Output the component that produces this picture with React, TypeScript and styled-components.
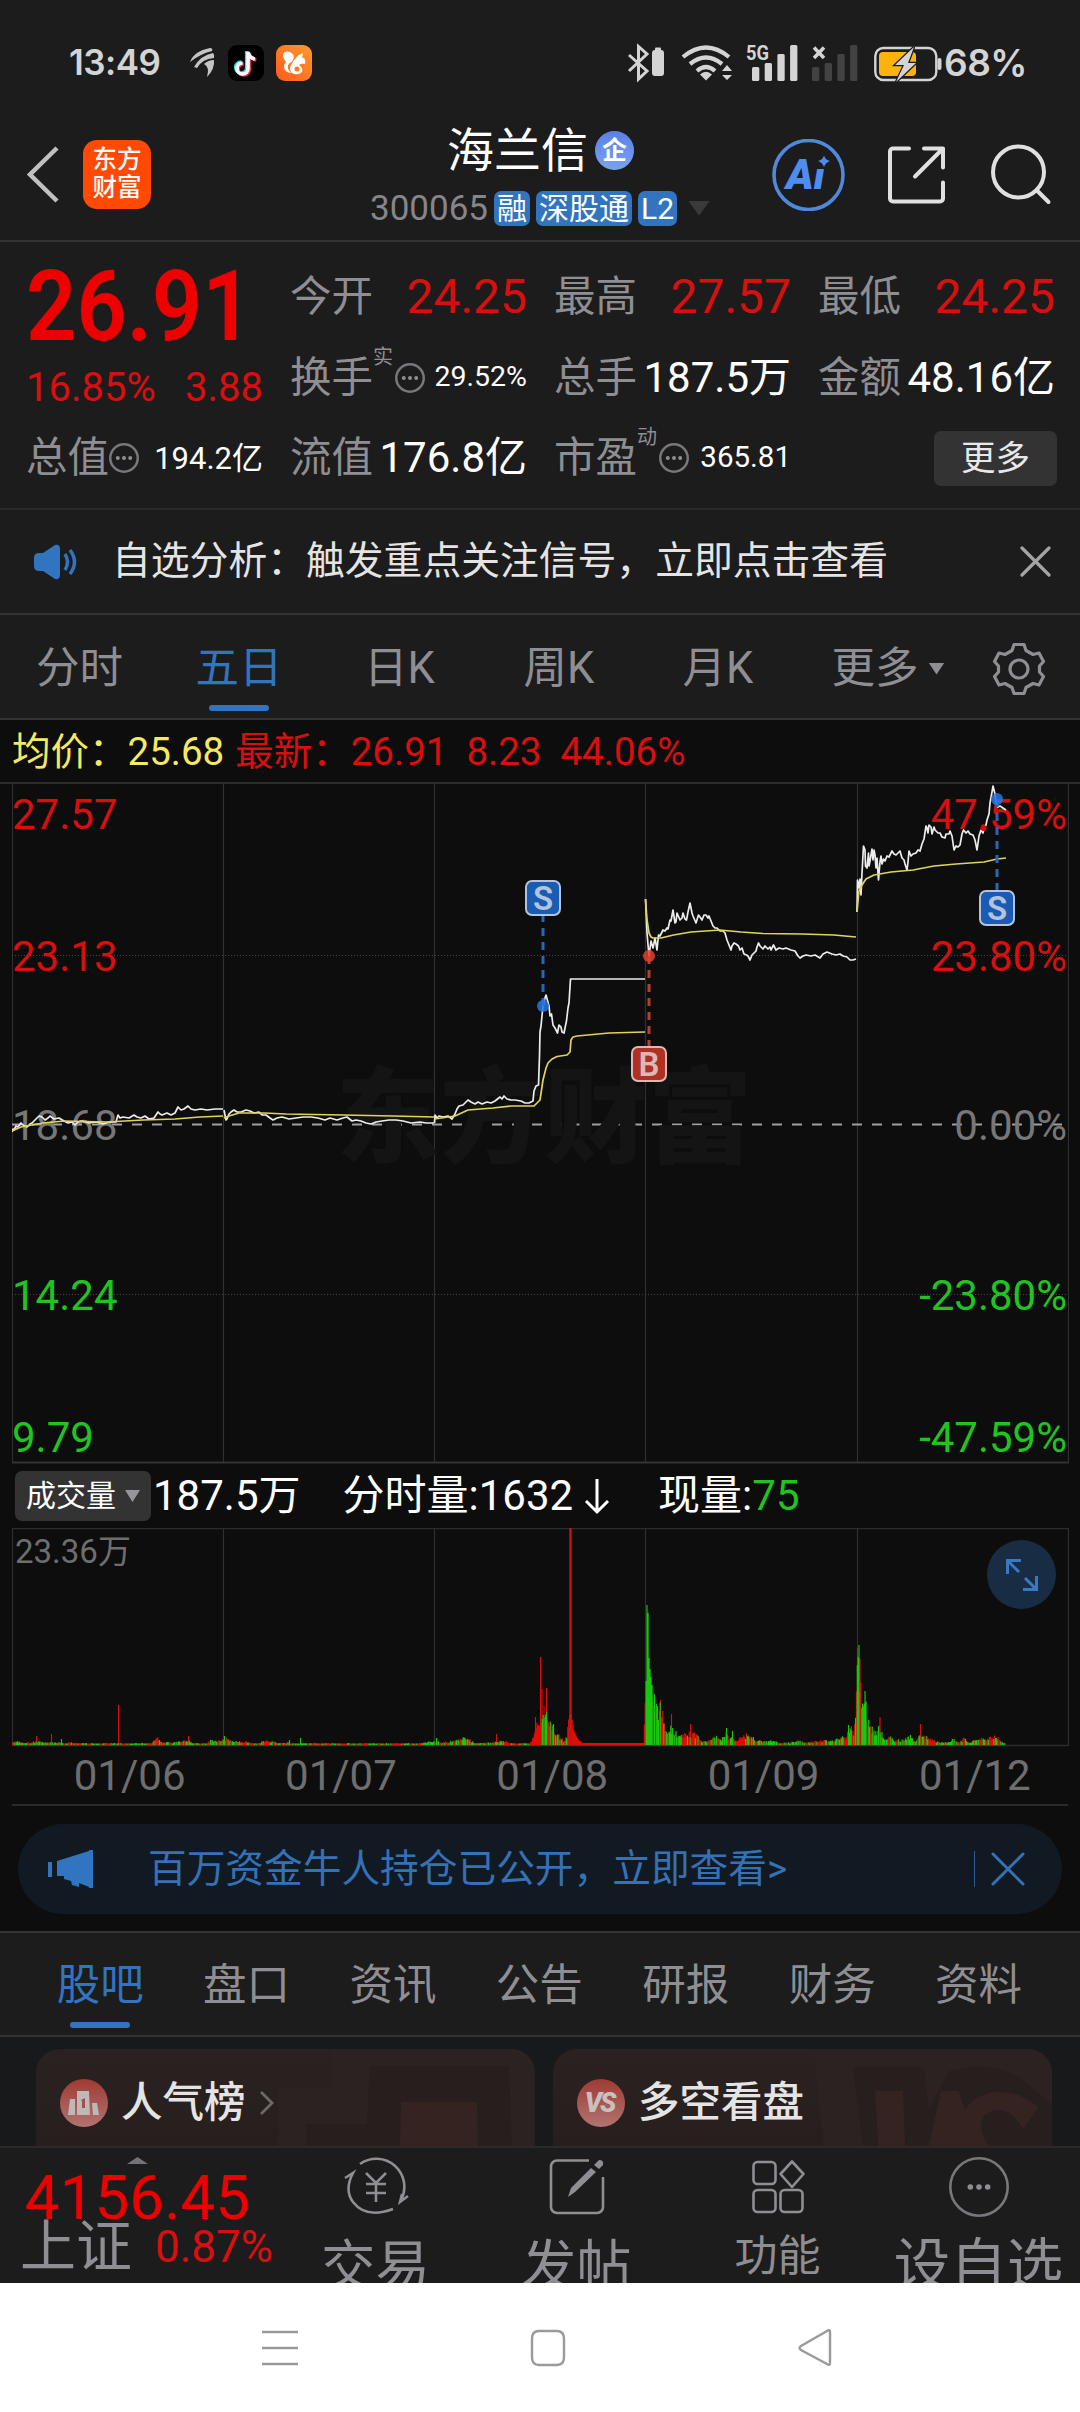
import React from "react";
import styled, { createGlobalStyle, css } from "styled-components";

const c = {
  panel: "#1c1c1c",
  ground: "#0d0d0d",
  line: "#333333",
  label: "#8e8e93",
  muted: "#6e6e6e",
  white: "#ffffff",
  soft: "#e4e4e4",
  red: "#d90f0f",
  hot: "#ee0000",
  green: "#20c420",
  blue: "#3174c0",
  yellow: "#f5e960",
};

const GlobalStyle = createGlobalStyle`
  * { box-sizing: border-box; }
  body {
    margin: 0;
    background: ${c.panel};
    font-family: Roboto, "Noto Sans CJK SC", sans-serif;
    line-height: 1;
    white-space: nowrap;
  }
  svg { display: block; flex: none; }
`;

const Screen = styled.div`
  width: 1080px;
  height: 2412px;
  display: flex;
  flex-direction: column;
  overflow: hidden;
  background: ${c.panel};
`;

const Text = styled.span<{ $size: number; $color?: string; $weight?: number }>`
  flex: none;
  font-size: ${(p) => p.$size}px;
  color: ${(p) => p.$color ?? c.white};
  font-weight: ${(p) => p.$weight ?? 400};
`;

/* ---------- status bar ---------- */

const StatusBar = styled.header`
  height: 125px;
  flex: none;
  display: flex;
  align-items: center;
  padding: 0 53px 0 69px;
  font-family: Inter, Roboto, sans-serif;
`;

const StatusText = styled.span<{ $size: number }>`
  font-size: ${(p) => p.$size}px;
  font-weight: 600;
  color: #d4d4d4;
  letter-spacing: -0.5px;
`;

const StatusApps = styled.div`
  display: flex;
  align-items: center;
  gap: 12px;
  margin-left: 28px;
  flex: 1;
`;

const AppTile = styled.div<{ $bg: string }>`
  width: 36px;
  height: 36px;
  border-radius: 9px;
  background: ${(p) => p.$bg};
`;

function LeafIcon() {
  return (
    <svg width="28" height="32" viewBox="0 0 28 32" fill="#c4c4c4">
      <path d="M2 15Q6 4 22 1Q25 1 24 4Q12 7 2 15Z" />
      <path d="M6 20Q13 8 25 6Q27 8 26 11Q14 12 9 21Z" />
      <path d="M19 30Q22 20 16 17Q20 13 26 13Q27 22 19 30Z" />
    </svg>
  );
}

function NoteIcon() {
  const d = "M20 7V23.5A5.5 5.5 0 1 1 14.500 18M20 7Q21 13 27 14";
  return (
    <svg width="36" height="36" viewBox="0 0 36 36" fill="none" strokeWidth="3.6">
      <path d={d} stroke="#25e0dc" transform="translate(-1.300 -1)" />
      <path d={d} stroke="#f0305a" transform="translate(1.300 1)" />
      <path d={d} stroke="#fff" />
    </svg>
  );
}

function SquirrelIcon() {
  return (
    <svg width="36" height="36" viewBox="0 0 36 36" fill="#fff">
      <path d="M8 14C5 9 9 5 14 7C19 9 19 15 14 18C11 20 11 24 15 28C8 27 6 21 10 17Z" />
      <path d="M27 8C21 10 18 15 15 20C12 26 16 30 22 29C28 28 27 23 24 21C22 20 25 18 29 19C30 15 28 12 26 13Z" />
      <circle cx="21" cy="24" r="2.500" fill="#ff7a1e" />
    </svg>
  );
}

function StatusIcons() {
  const bars = [14, 18, 27, 36];
  return (
    <svg width="318" height="40" viewBox="626 42 318 40" fill="none">
      <path d="M629 54L647 70L638.500 78V45.500L647 53L629 70" stroke="#d4d4d4" strokeWidth="3" />
      <rect x="652" y="49" width="12" height="26" rx="3" fill="#d4d4d4" />
      <rect x="655" y="46.500" width="6" height="4" rx="1" fill="#d4d4d4" />
      <g stroke="#d4d4d4" strokeWidth="4.200">
        <path d="M683 56Q706 37 729 56" />
        <path d="M690 63Q706 50 722 63" />
        <path d="M697 70Q706 62 715 70" />
      </g>
      <path d="M700 73.500Q706 68 712 73.500L706 79.500Z" fill="#d4d4d4" />
      <path d="M722 70L727 64L732 70ZM722 74L727 79L732 74Z" fill="#d4d4d4" />
      <text x="746" y="58.500" fontFamily="Roboto" fontWeight="700" fontSize="20" fill="#d4d4d4" textLength="23" lengthAdjust="spacingAndGlyphs">
        5G
      </text>
      {bars.map((h, i) => (
        <rect key={i} x={752 + i * 12.700} y={80 - h} width="7.300" height={h} rx="1.500" fill="#d4d4d4" />
      ))}
      {bars.map((h, i) => (
        <rect key={i} x={812 + i * 12.700} y={80 - h} width="7.300" height={h} rx="1.500" fill="#424242" />
      ))}
      <path d="M814 46.500L824 57M824 46.500L814 57" stroke="#d4d4d4" strokeWidth="3.500" />
      <rect x="875.300" y="47" width="61" height="32" rx="8" stroke="#d4d4d4" strokeWidth="2.400" />
      <rect x="937.500" y="57" width="4" height="12" rx="2" fill="#d4d4d4" />
      <rect x="879" y="51" width="37" height="24" rx="4" fill="#ffb30a" />
      <path
        d="M914 46L895 64H904L896 81L916 62H908Z"
        fill="#d4d4d4"
        stroke={c.panel}
        strokeWidth="2.500"
        paintOrder="stroke"
      />
    </svg>
  );
}

/* ---------- title bar ---------- */

const TitleBar = styled.div`
  height: 117px;
  flex: none;
  display: grid;
  grid-template-columns: 1fr 342px 1fr;
  border-bottom: 2px solid ${c.line};
`;

const TitleLeft = styled.div`
  display: flex;
  align-items: flex-start;
  gap: 23px;
  padding: 15px 0 0 25px;
`;

const BrandTile = styled.div`
  width: 68px;
  height: 69px;
  border-radius: 14px;
  background: #ff4a06;
  display: flex;
  flex-direction: column;
  align-items: center;
  justify-content: center;
  gap: 4px;
  padding-bottom: 1px;
`;

const TitleCenter = styled.div`
  display: flex;
  flex-direction: column;
  align-items: center;
`;

const NameRow = styled.div`
  display: flex;
  align-items: center;
  gap: 7px;
  height: 50px;
  padding-left: 1px;
`;

const CompanyBadge = styled.div`
  width: 39px;
  height: 39px;
  border-radius: 50%;
  background: linear-gradient(#5a80e8, #7ba2ec);
  display: flex;
  align-items: center;
  justify-content: center;
`;

const CodeRow = styled.div`
  display: flex;
  align-items: center;
  gap: 6px;
  height: 36px;
  margin-top: 15px;
`;

const Tag = styled.span`
  height: 35px;
  line-height: 35px;
  padding: 0 3px;
  border-radius: 7px;
  background: ${c.blue};
  color: ${c.white};
  font-size: 30px;
`;

const TitleRight = styled.div`
  display: flex;
  align-items: flex-start;
  justify-content: flex-end;
  padding: 14px 28px 0 0;
`;

/* ---------- quote panel ---------- */

const QuotePanel = styled.section`
  height: 268px;
  flex: none;
  display: grid;
  grid-template-columns: repeat(4, 237px);
  grid-template-rows: 80px 81px 80px;
  column-gap: 27px;
  padding: 15px 26px 0;
  border-bottom: 2px solid #2a2a2a;
`;

const LastPrice = styled.div`
  grid-row: span 2;
  display: flex;
  flex-direction: column;
`;

const BigNumber = styled.div`
  height: 102px;
  display: flex;
  align-items: center;
  font-size: 98px;
  font-weight: 600;
  color: ${c.hot};
  transform: scaleX(0.9);
  transform-origin: left;
`;

const Spread = styled.div<{ $h?: number }>`
  display: flex;
  align-items: center;
  justify-content: space-between;
  height: ${(p) => (p.$h ? `${p.$h}px` : "auto")};
`;

const LabelGroup = styled.div`
  display: flex;
  align-items: center;
`;

const Superscript = styled.span`
  align-self: flex-start;
  margin-top: -10px;
  margin-right: 2px;
  font-size: 20px;
  color: ${c.label};
`;

const MoreButton = styled.button`
  justify-self: end;
  align-self: center;
  width: 123px;
  height: 55px;
  border: 0;
  border-radius: 7px;
  background: #333333;
  color: #e8e8e8;
  font: 400 34.500px/1 Roboto, "Noto Sans CJK SC", sans-serif;
  margin-right: -2px;
`;

function DotsIcon({ size = 30, stroke = 2.5, r = 2 }: { size?: number; stroke?: number; r?: number }) {
  const m = size / 2;
  return (
    <svg width={size} height={size} viewBox={`0 0 ${size} ${size}`} fill="none">
      <circle cx={m} cy={m} r={m - stroke / 2} stroke="#78787c" strokeWidth={stroke} />
      {[-1, 0, 1].map((i) => (
        <circle key={i} cx={m + i * r * 3.100} cy={m} r={r} fill="#8e8e93" />
      ))}
    </svg>
  );
}

type QuoteProps = { label: string; value: string; size: number; color?: string; sup?: string; dots?: boolean };

function Quote({ label, value, size, color, sup, dots }: QuoteProps) {
  return (
    <Spread>
      <LabelGroup>
        <Text $size={41.500} $color={c.label}>{label}</Text>
        {sup && <Superscript>{sup}</Superscript>}
        {dots && <DotsIcon />}
      </LabelGroup>
      <Text $size={size} $color={color}>{value}</Text>
    </Spread>
  );
}

/* ---------- notice ---------- */

const Notice = styled.div`
  height: 105px;
  flex: none;
  display: flex;
  align-items: center;
  padding: 0 29px 0 32px;
  border-bottom: 2px solid ${c.line};
`;

const Grow = styled.div<{ $pl?: number }>`
  flex: 1;
  display: flex;
  padding-left: ${(p) => p.$pl ?? 0}px;
`;

function Cross({ size, color, w }: { size: number; color: string; w: number }) {
  return (
    <svg width={size} height={size} viewBox={`0 0 ${size} ${size}`} stroke={color} strokeWidth={w} strokeLinecap="round">
      <path d={`M2 2L${size - 2} ${size - 2}M${size - 2} 2L2 ${size - 2}`} />
    </svg>
  );
}

/* ---------- tabs ---------- */

const PeriodTabs = styled.nav`
  height: 105px;
  flex: none;
  display: flex;
  border-bottom: 2px solid ${c.line};
`;

const Tab = styled.div<{ $w: number; $on?: boolean }>`
  position: relative;
  width: ${(p) => p.$w}px;
  display: flex;
  align-items: center;
  justify-content: center;
  gap: 10px;
  padding-top: 4px;
  font-size: 43.500px;
  color: ${(p) => (p.$on ? c.blue : c.label)};
  ${(p) =>
    p.$on &&
    css`
      &::after {
        content: "";
        position: absolute;
        left: 50%;
        margin-left: -30px;
        bottom: 7px;
        width: 60px;
        height: 6px;
        border-radius: 3px;
        background: ${c.blue};
      }
    `}
`;

const Triangle = styled.i<{ $w: number; $h: number; $color: string; $up?: boolean }>`
  width: ${(p) => p.$w}px;
  height: ${(p) => p.$h}px;
  background: ${(p) => p.$color};
  clip-path: ${(p) => (p.$up ? "polygon(50% 0, 100% 100%, 0 100%)" : "polygon(0 0, 100% 0, 50% 100%)")};
`;

/* ---------- charts ---------- */

const Legend = styled.div`
  height: 62px;
  flex: none;
  display: flex;
  align-items: center;
  gap: 19px;
  padding: 2px 0 0 12px;
`;

const ChartGround = styled.section`
  height: 1211px;
  flex: none;
  display: flex;
  flex-direction: column;
  background: ${c.ground};
  padding-bottom: 16px;
`;

const PriceFrame = styled.div`
  position: relative;
  width: 1080px;
  height: 681px;
  flex: none;
  padding-left: 12px;
  border-top: 2px solid #2c2c2c;
`;

const AxisLabel = styled.span<{ $y: number; $right?: boolean; $color: string }>`
  position: absolute;
  top: ${(p) => p.$y - 21}px;
  ${(p) => (p.$right ? "right: 13px;" : "left: 12px;")}
  font-size: 42px;
  color: ${(p) => p.$color};
`;

const Watermark = styled.span`
  position: absolute;
  left: 336px;
  top: 284px;
  font-size: 104px;
  font-weight: 900;
  color: #141414;
`;

const Marker = styled.span<{ $x: number; $y: number; $bg: string; $edge: string }>`
  position: absolute;
  left: ${(p) => p.$x - 18}px;
  top: ${(p) => p.$y - 18}px;
  width: 36px;
  height: 36px;
  line-height: 33px;
  text-align: center;
  border: 2px solid ${(p) => p.$edge};
  border-radius: 7px;
  background: ${(p) => p.$bg};
  color: ${(p) => p.$edge};
  font-size: 33px;
  font-weight: 600;
`;

const columns = [0, 211, 422, 633, 845, 1056];

const priceLines = [
  "0,348 1,345 2,346 4,342 6,343 9,339 11,341 15,343 18,340 20,339 24,335 27,332 30,333 33,336 36,334 38,332 42,335 47,334 52,337 56,339 60,338 63,341 66,338 70,337 77,339 84,338 91,340 97,338 104,338 106,331 108,334 111,333 117,334 122,331 125,333 129,334 133,332 137,335 142,334 146,328 148,330 150,331 155,329 159,331 163,329 166,323 169,326 172,325 176,322 179,325 183,326 189,325 195,326 203,325 211,325",
  "212,326 214,336 215,335 217,330 219,328 222,326 225,328 229,328 234,326 238,327 242,329 247,328 250,331 254,331 258,334 261,336 265,334 270,333 277,335 284,334 291,333 299,333 306,334 313,336 318,334 325,336 331,334 335,333 340,337 344,336 349,337 354,339 359,340 364,338 370,337 377,336 384,336 391,337 399,339 408,338 414,339 422,339",
  "422.5,339 423,331 425,334 427,332 431,333 436,332 440,335 443,330 445,325 447,322 451,321 453,319 456,316 459,318 463,320 466,318 470,320 475,318 479,319 483,317 488,313 490,315 492,312 495,315 499,316 503,316 509,317 513,319 517,319 521,317 522,307 524,302 526.5,301 527.5,272 528,248 529,242 531,222 533,214 534,211 537,222 538,232 539.5,230 541,241 543,244 545.5,249 547,241 549,243 550,248 552,249 553,244 554.5,237 556,224 557,219 558.5,195 633,195",
  "633.5,115 635,149 637,172 639,157 641,164 643,154 645,166 646.5,151 648,152 651,146 653,147 655,144 656,145 658,136 659,137 661,126 663,139 664,138 665,129 668,136 670,134 671,129 673,135 674.5,136 676,128 678,119 680,129 681,132 684,139 686.5,131 688,133 690,136 692,131 694,131 696,134 697,132 699,137 701,142 703,144 705,144 708,147 711,147 713,149 715,156 717,161 719,166 720,162 722,159 724,160 726.5,162 728,166 730,164 732,170 734.5,171 736,172 738,176 740,171 744,167 745,163 746.5,159 748,162 751,165 753,162 756,165 758,163 759,166 761.5,161 764,166 767,164 771,165 774,164 779,166 783,167 786,172 788,174 791,172 794,171 799,172 803,171 808,174 811,170 815,168 820,170 824,171 828,170 831,172 835,173 838,176 841,176 844,175",
  "845,128 845.5,96 846,98 847,104 848,95 849,111 850,89 851.5,62 853,66 853.5,82 855,84 856.5,69 857,82 858,77 860,65 861,76 862,66 863,71 864,84 865,74 866.5,96 868,78 869,72 870,80 871.5,75 873,77 875,72 877,73 880,67 882,70 884,71 888,67 890,74 892,76 893,80 895,86 896,78 897,67 899,72 901,70 904,69 906,66 908,67 910,60 912,55 914,42 915,44 916,49 917,41 919,43 920,50 922,43 923,46 926,49 928,49 930,53 933,54 934,50 937,50 938,47 940,52 942,66 944,62 946,63 948,61 950,50 951.5,46 954,49 956,47 958,50 961,51 963,56 965,66 967,52 969,46 971,49 972,44 974,41 975,36 977,30 978,19 980,8 981,2 983,10 984,19 986,23 988,22 991,24 994,26",
];

const averageLines = [
  "0,347 9,343 31,339 52,337 95,338 131,336 163,335 188,333 211,332",
  "212,334 217,332 227,329 252,329 274,330 331,331 381,332 422,333",
  "422.5,335 443,332 456,326 481,324 499,322 522,322 528,316 531,296 534,284 536,279 540,275 545,272.500 555,271 558,268 559,256 561,253 565,252 597,249 633,248",
  "633.5,115 635,136 637,149 639,153 641,154 649,154 661.5,151 679,148 708,146 729,148 751,149.500 790,150 822,151 844,153",
  "845,128 847,107 850,101 854,95 862,91 879,88 901,86 922,82 944,80 972,78 985,75 994,74",
];

type TradeMark = { side: "S" | "B"; x: number; dot: number; box: number };
const trades: TradeMark[] = [
  { side: "S", x: 531, dot: 222, box: 114 },
  { side: "B", x: 637, dot: 172, box: 280 },
  { side: "S", x: 985, dot: 15, box: 124 },
];

const axis = [
  { y: 31, left: "27.57", right: "47.59%", color: c.red },
  { y: 173, left: "23.13", right: "23.80%", color: c.red },
  { y: 342, left: "18.68", right: "0.00%", color: "#777777" },
  { y: 512, left: "14.24", right: "-23.80%", color: c.green },
  { y: 654, left: "9.79", right: "-47.59%", color: c.green },
];

function PriceChart() {
  return (
    <PriceFrame>
      <Watermark>东方财富</Watermark>
      <svg width="1057" height="681" viewBox="0 0 1057 681" fill="none">
        {columns.map((x) => (
          <path key={x} d={`M${x + 0.5} 0V679`} stroke="#303030" strokeWidth="1.200" />
        ))}
        <path d="M0 678.500H1057" stroke="#333" strokeWidth="2" />
        <path d="M0 171.500H1056M0 510.500H1056" stroke="#444" strokeDasharray="1 2" />
        <path d="M0 340.500H1056" stroke="#a0a0a0" strokeWidth="1.800" strokeDasharray="10 10" />
      </svg>
      {axis.map((a) => (
        <React.Fragment key={a.left}>
          <AxisLabel $y={a.y} $color={a.color}>{a.left}</AxisLabel>
          <AxisLabel $y={a.y} $color={a.color} $right>{a.right}</AxisLabel>
        </React.Fragment>
      ))}
      <Overlay>
        <svg width="1057" height="681" viewBox="0 0 1057 681" fill="none">
          {priceLines.map((p) => (
            <polyline key={p} points={p} stroke="#ececec" strokeWidth="1.700" strokeLinejoin="round" />
          ))}
          {averageLines.map((p) => (
            <polyline key={p} points={p} stroke="#e0d458" strokeWidth="1.700" strokeLinejoin="round" />
          ))}
          <circle cx="971.500" cy="44" r="3" fill="#ee0000" />
          {trades.map((t) => (
            <g key={t.x} stroke={t.side === "S" ? "#2a66b4" : "#b8402f"} strokeWidth="3">
              <path d={`M${t.x} ${t.dot}V${t.box}`} strokeDasharray="8 6" />
              <circle cx={t.x} cy={t.dot} r="6" stroke="none" fill={t.side === "S" ? "#2878e6" : "#e0402e"} fillOpacity="0.850" />
            </g>
          ))}
        </svg>
        {trades.map((t) => (
          <Marker
            key={t.x}
            $x={t.x}
            $y={t.box}
            $bg={t.side === "S" ? "#1a5bb4" : "#b03024"}
            $edge={t.side === "S" ? "#b4c4dc" : "#dcb8b4"}
          >
            {t.side}
          </Marker>
        ))}
      </Overlay>
    </PriceFrame>
  );
}

const Overlay = styled.div`
  position: absolute;
  left: 12px;
  top: 0;
  width: 1057px;
  height: 681px;
`;

const VolumeHeader = styled.div`
  height: 65px;
  flex: none;
  display: flex;
  align-items: center;
  padding: 1px 0 0 15px;
`;

const IndicatorButton = styled.div`
  width: 136px;
  height: 50px;
  border-radius: 7px;
  background: #333333;
  display: flex;
  align-items: center;
  justify-content: center;
  gap: 9px;
  font-size: 30px;
  color: ${c.white};
`;

const Metric = styled.div<{ $ml: number }>`
  display: flex;
  align-items: center;
  margin-left: ${(p) => p.$ml}px;
`;

const VolumeFrame = styled.div`
  position: relative;
  height: 219px;
  flex: none;
  padding-left: 12px;
`;

const VolumeMax = styled.span`
  position: absolute;
  left: 15px;
  top: 7px;
  font-size: 33px;
  color: ${c.muted};
`;

const ExpandButton = styled.div`
  position: absolute;
  right: 24px;
  top: 12px;
  width: 69px;
  height: 69px;
  border-radius: 50%;
  background: #182c44;
  display: flex;
  align-items: center;
  justify-content: center;
`;

/* ceiling of the ordinary bars, as [x, height] */
const envelope: [number, number][] = [
  [0, 5], [6, 4], [20, 3], [26, 5], [30, 3], [60, 3], [64, 2], [138, 2], [146, 8], [150, 3], [163, 3], [176, 7], [180, 2], [195, 2],
  [200, 7], [205, 4], [214, 8], [220, 5], [235, 4], [240, 2], [246, 2], [252, 5], [262, 4], [266, 2], [276, 3], [280, 2], [410, 2],
  [422, 5], [430, 3], [437, 4], [442, 5], [453, 11], [458, 6], [463, 2], [484, 4], [493, 5], [498, 2], [518, 2], [522, 10], [524, 28],
  [527, 22], [531, 48], [534, 40], [536, 26], [541, 22], [546, 12], [552, 5], [555, 12], [557, 30], [559, 34], [562, 15], [566, 6],
  [571, 2], [632, 2],
  [633, 60], [635, 132], [637, 78], [640, 59], [643, 42], [648, 45], [651, 34], [655, 15], [659, 22], [664, 14], [672, 12], [679, 14],
  [684, 13], [688, 6], [695, 4], [704, 10], [709, 6], [714, 12], [724, 5], [733, 12], [739, 12], [744, 6], [755, 4], [760, 5],
  [766, 3], [779, 3], [786, 5], [794, 3], [808, 5], [820, 5], [833, 10], [837, 18], [842, 14], [844, 60],
  [846, 98], [849, 60], [853, 52], [857, 26], [863, 16], [868, 22], [872, 8], [877, 13], [882, 6], [890, 6], [898, 10], [903, 5],
  [908, 14], [913, 10], [918, 7], [925, 4], [935, 3], [942, 7], [947, 3], [952, 8], [958, 3], [967, 9], [973, 6], [978, 9], [984, 10],
  [989, 5], [994, 2],
];

/* bars that stand clear of their neighbours, as [x, height, rising] */
const spikes: [number, number, boolean][] = [
  [24, 9, true], [39, 11, true], [49, 6, false], [106, 40, true], [176, 9, true], [212, 9, false], [277, 5, false], [288, 7, false],
  [424, 7, false], [484, 11, true], [523, 28, true], [528, 88, true], [529.5, 56, true], [534, 57, true], [541, 21, false],
  [634.5, 140, false], [635.6, 132, false], [636.6, 87, false], [637.6, 76, false], [638.6, 68, false], [639.6, 60, false],
  [642, 51, false], [645, 39, false], [648, 45, true], [659, 31, true], [678, 21, true], [714, 17, false], [720, 14, false],
  [836, 20, false], [839, 19, true], [845, 97, true], [846.5, 100, false], [847.5, 86, true], [852.5, 54, false],
  [867.5, 28, true], [898, 10, false], [908, 21, true],
];

function ceilingAt(x: number) {
  for (let i = 1; i < envelope.length; i++) {
    const [x1, h1] = envelope[i];
    if (x <= x1) {
      const [x0, h0] = envelope[i - 1];
      return h0 + ((h1 - h0) * (x - x0)) / (x1 - x0 || 1);
    }
  }
  return 0;
}

function volumePaths() {
  let seed = 77;
  const rand = () => {
    seed = (seed * 16807) % 2147483647;
    return seed / 2147483647;
  };
  let up = "";
  let down = "";
  for (let x = 0.500; x < 994; x += 0.880) {
    const limit = (x > 555 && x < 633);
    const h = Math.max(1.500, ceilingAt(x) * (limit ? 0.950 : 0.500 + rand() * 0.500));
    const rising = limit || (x > 517 && x < 529) || (x > 633.5 && x < 641 ? false : rand() < 0.520);
    const seg = `M${x.toFixed(2)} 217v-${h.toFixed(1)}`;
    if (rising) up += seg;
    else down += seg;
  }
  spikes.forEach(([x, h, rising]) => {
    const seg = `M${x + 0.5} 217v-${h}`;
    if (rising) up += seg;
    else down += seg;
  });
  return { up, down };
}

function VolumeChart() {
  const { up, down } = volumePaths();
  return (
    <VolumeFrame>
      <svg width="1057" height="219" viewBox="0 0 1057 219" fill="none">
        <path d="M0 0.500H1056M0 217.500H1056" stroke="#2c2c2c" strokeWidth="1.500" />
        {columns.map((x) => (
          <path key={x} d={`M${x + 0.5} 0V218`} stroke="#303030" strokeWidth="1.200" />
        ))}
        <path d={up} stroke="#e00c08" strokeWidth="1.150" />
        <path d={down} stroke="#18c810" strokeWidth="1.150" />
        <path d="M558.500 217V0" stroke="#c41414" strokeWidth="2.400" />
        <path d="M0 217.500H994" stroke="#8a1c10" strokeWidth="1.200" />
      </svg>
      <VolumeMax>23.36万</VolumeMax>
      <ExpandButton>
        <svg width="34" height="34" viewBox="0 0 34 34" fill="none" stroke="#3a78c4" strokeWidth="3">
          <path d="M2.500 16V2.500H16M2.500 2.500L14 14M31.500 18V31.500H18M31.500 31.500L20 20" />
        </svg>
      </ExpandButton>
    </VolumeFrame>
  );
}

const DateRow = styled.div`
  height: 59px;
  flex: none;
  display: grid;
  grid-template-columns: repeat(5, 211.300px);
  justify-items: center;
  align-items: center;
  margin-left: 12px;
  width: 1056px;
  padding-left: 12px;
  border-bottom: 2px solid #2a2a2a;
  font-size: 42px;
  color: ${c.muted};
`;

const PromoBanner = styled.div`
  height: 90px;
  flex: none;
  margin: 18px 18px 0;
  border-radius: 45px;
  background: #111a22;
  display: flex;
  align-items: center;
  padding: 0 37px 0 30px;
`;

const Divider = styled.i`
  width: 1.500px;
  height: 36px;
  background: #2a5c94;
  margin-right: 16px;
`;

/* ---------- lower tabs and cards ---------- */

const SectionTabs = styled.nav`
  height: 106px;
  flex: none;
  display: flex;
  padding: 0 27px;
  border-top: 2px solid ${c.line};
  border-bottom: 2px solid ${c.line};
`;

const CardStrip = styled.section`
  height: 109px;
  flex: none;
  overflow: hidden;
  display: flex;
  gap: 18px;
  padding: 12px 28px 0 36px;
  background: #18191b;
`;

const Card = styled.div`
  position: relative;
  width: 499px;
  height: 140px;
  flex: none;
  overflow: hidden;
  border-radius: 24px;
  background: linear-gradient(#2a2221, #261d1d);
`;

const CardArt = styled.div`
  position: absolute;
  inset: 0;
`;

const CardHead = styled.div`
  position: relative;
  height: 108px;
  display: flex;
  align-items: center;
  padding-left: 24px;
  gap: 13px;
`;

const CardIcon = styled.div`
  width: 48px;
  height: 48px;
  border-radius: 50%;
  background: linear-gradient(#a03a34, #b07470);
  display: flex;
  align-items: center;
  justify-content: center;
`;

const VersusText = styled.span`
  font-size: 27px;
  font-weight: 900;
  font-style: italic;
  color: #c8c0be;
  letter-spacing: -2px;
  margin-left: -3px;
`;

/* ---------- bottom bar ---------- */

const BottomBar = styled.nav`
  height: 137px;
  flex: none;
  overflow: hidden;
  display: grid;
  grid-template-columns: 275px repeat(4, 201px);
  border-top: 2px solid #2a2a2a;
  background: ${c.panel};
`;

const IndexCell = styled.div`
  display: flex;
  flex-direction: column;
  align-items: center;
  padding-top: 9px;
`;

const IndexRow = styled.div<{ $mt: number; $h: number }>`
  display: flex;
  align-items: center;
  gap: 23px;
  height: ${(p) => p.$h}px;
  margin-top: ${(p) => p.$mt}px;
`;

const Action = styled.div`
  display: flex;
  flex-direction: column;
  align-items: center;
  padding-top: 9px;
`;

const ActionLabel = styled.span<{ $size: number; $center: number }>`
  font-size: ${(p) => p.$size}px;
  line-height: 60px;
  margin-top: ${(p) => p.$center - 99}px;
  color: ${c.label};
`;

function YenIcon() {
  return (
    <svg width="68" height="60" viewBox="0 0 68 60" fill="none" stroke={c.label} strokeWidth="2.600">
      <path d="M18 7A28 28 0 0 1 59 43M3 21L11 16Q2 33 11 45Q24 62 51 52M66 39L58 45L60 37" />
      <path d="M24 16L34 26L44 16M34 26V45M24 27H44M24 36H44" />
    </svg>
  );
}

function PostIcon() {
  return (
    <svg width="60" height="60" viewBox="0 0 60 60" fill="none" stroke={c.label} strokeWidth="2.600">
      <path d="M42 3.500H10A6 6 0 0 0 4 9.500V50A6 6 0 0 0 10 56H50A6 6 0 0 0 56 50V20" />
      <path d="M21 40L24 31L44 11L49 15L28 35ZM47 8L52 3Q57 3 56 8L52 12Z" fill={c.label} stroke="none" />
    </svg>
  );
}

function GridIcon() {
  return (
    <svg width="60" height="60" viewBox="0 0 60 60" fill="none" stroke={c.label} strokeWidth="2.600">
      <rect x="5.500" y="5" width="22" height="22" rx="4" />
      <rect x="5.500" y="33" width="22" height="22" rx="4" />
      <rect x="32.500" y="33" width="22" height="22" rx="4" />
      <path d="M44 4.500L55.500 17L44 30L32.500 17Z" strokeLinejoin="round" />
    </svg>
  );
}

const SystemNav = styled.footer`
  height: 131px;
  flex: 1;
  display: grid;
  grid-template-columns: 36px 36px 36px;
  column-gap: 232px;
  padding: 46px 0 0 262px;
  background: #ffffff;
`;

const sections = ["股吧", "盘口", "资讯", "公告", "研报", "财务", "资料"];

export default function App() {
  return (
    <Screen>
      <GlobalStyle />
      <StatusBar>
        <StatusText $size={35}>13:49</StatusText>
        <StatusApps>
          <LeafIcon />
          <AppTile $bg="#000"><NoteIcon /></AppTile>
          <AppTile $bg="linear-gradient(45deg, #ff5a1c, #ff9a2c)"><SquirrelIcon /></AppTile>
        </StatusApps>
        <StatusIcons />
        <StatusText $size={37}>68%</StatusText>
      </StatusBar>

      <TitleBar>
        <TitleLeft>
          <svg width="35" height="69" viewBox="0 0 35 69" fill="none" stroke="#c0c0c0" strokeWidth="4.500">
            <path d="M32 8L5 34.500L32 61" />
          </svg>
          <BrandTile>
            <Text $size={24.500} $weight={500}>东方</Text>
            <Text $size={24.500} $weight={500}>财富</Text>
          </BrandTile>
        </TitleLeft>
        <TitleCenter>
          <NameRow>
            <Text $size={47}>海兰信</Text>
            <CompanyBadge><Text $size={25} $weight={700}>企</Text></CompanyBadge>
          </NameRow>
          <CodeRow>
            <Text $size={35} $color="#86868a">300065</Text>
            <Tag>融</Tag>
            <Tag>深股通</Tag>
            <Tag>L2</Tag>
            <Triangle $w={22} $h={15} $color="#3a3a3a" style={{ marginLeft: 5 }} />
          </CodeRow>
        </TitleCenter>
        <TitleRight>
          <svg width="280" height="72" viewBox="772 138.500 280 72" fill="none">
            <circle cx="808.500" cy="174.500" r="34.500" stroke="#5088dc" strokeWidth="3.600" />
            <text x="786" y="188" fontFamily="Roboto" fontWeight="900" fontStyle="italic" fontSize="42" fill="#4f8cf0">Ai</text>
            <path d="M816 152H832V168.500H816Z" fill={c.panel} />
            <path d="M824 155Q825.500 159.500 830 160.500Q825.500 162 824 166.500Q822.500 162 818 160.500Q822.500 159.500 824 155Z" fill="#4f8cf0" />
            <g stroke="#e0e0e0" strokeWidth="4" strokeLinecap="round" strokeLinejoin="round">
              <path d="M909 148H893A3 3 0 0 0 890 151V198A3 3 0 0 0 893 201H940A3 3 0 0 0 943 198V182" />
              <path d="M924 148H943V167M943 148L915 176" />
              <circle cx="1018.500" cy="171.500" r="25.500" />
              <path d="M1037 190L1048.500 201.500" />
            </g>
          </svg>
        </TitleRight>
      </TitleBar>

      <QuotePanel>
        <LastPrice>
          <BigNumber>26.91</BigNumber>
          <Spread $h={62}>
            <Text $size={40} $color={c.red}>16.85%</Text>
            <Text $size={40} $color={c.red}>3.88</Text>
          </Spread>
        </LastPrice>
        <Quote label="今开" value="24.25" size={48} color={c.red} />
        <Quote label="最高" value="27.57" size={48} color={c.red} />
        <Quote label="最低" value="24.25" size={48} color={c.red} />
        <Quote label="换手" value="29.52%" size={28.500} sup="实" dots />
        <Quote label="总手" value="187.5万" size={42} />
        <Quote label="金额" value="48.16亿" size={42} />
        <Quote label="总值" value="194.2亿" size={31} dots />
        <Quote label="流值" value="176.8亿" size={42} />
        <Quote label="市盈" value="365.81" size={29.500} sup="动" dots />
        <MoreButton>更多</MoreButton>
      </QuotePanel>

      <Notice>
        <svg width="46" height="36" viewBox="0 0 46 36" fill="none">
          <path d="M2 14Q2 9 7 9H11L23 1Q28 0 28 5V31Q28 36 23 35L11 27H7Q2 27 2 22Z" fill={c.blue} />
          <path d="M33 10Q38 18 33 26M38 6Q47 18 38 30" stroke={c.blue} strokeWidth="3.500" />
        </svg>
        <Grow $pl={34}>
          <Text $size={38.800} $color={c.soft}>自选分析：触发重点关注信号，立即点击查看</Text>
        </Grow>
        <Cross size={31} color="#a4a4a4" w={3.200} />
      </Notice>

      <PeriodTabs>
        <Tab $w={159}>分时</Tab>
        <Tab $w={160} $on>五日</Tab>
        <Tab $w={161}>日K</Tab>
        <Tab $w={158}>周K</Tab>
        <Tab $w={160}>月K</Tab>
        <Tab $w={180}>
          更多
          <Triangle $w={16} $h={12} $color={c.label} />
        </Tab>
        <Tab $w={82}>
          <svg width="54" height="54" viewBox="0 0 54 54" fill="none" stroke={c.label} strokeWidth="3.200" strokeLinejoin="round">
            <path d="M22 2.500H32L34 8.500L41 12.500L47 11L51.500 19.500L47.500 24V30L51.500 34.500L47 43L41 41.500L34 45.500L32 51.500H22L20 45.500L13 41.500L7 43L2.500 34.500L6.500 30V24L2.500 19.500L7 11L13 12.500L20 8.500Z" />
            <circle cx="27" cy="27" r="9" />
          </svg>
        </Tab>
      </PeriodTabs>

      <ChartGround>
        <Legend>
          <Text $size={38.500} $color={c.yellow} style={{ marginRight: -8 }}>均价：25.68</Text>
          <Text $size={38.500} $color={c.red}>最新：26.91</Text>
          <Text $size={38.500} $color={c.red}>8.23</Text>
          <Text $size={38.500} $color={c.red}>44.06%</Text>
        </Legend>
        <PriceChart />
        <VolumeHeader>
          <IndicatorButton>
            成交量
            <Triangle $w={15} $h={12} $color="#96969a" />
          </IndicatorButton>
          <Metric $ml={2}><Text $size={42}>187.5万</Text></Metric>
          <Metric $ml={42}>
            <Text $size={42}>分时量:1632</Text>
            <svg width="44" height="38" viewBox="0 0 44 38" fill="none" stroke="#fff" strokeWidth="3">
              <path d="M24 2V35M13 24L24 35L35 24" />
            </svg>
          </Metric>
          <Metric $ml={41}>
            <Text $size={42}>现量:</Text>
            <Text $size={42} $color={c.green}>75</Text>
          </Metric>
        </VolumeHeader>
        <VolumeChart />
        <DateRow>
          {["01/06", "01/07", "01/08", "01/09", "01/12"].map((d) => (
            <span key={d}>{d}</span>
          ))}
        </DateRow>
        <PromoBanner>
          <svg width="46" height="40" viewBox="0 0 46 40" fill="#3174c0">
            <rect x="0" y="13" width="4" height="15" />
            <path d="M9 12L41 2V1H45V39H41V38L31 34V38L24 36L23 32L16 30V27H9Z" />
          </svg>
          <Grow $pl={54}>
            <Text $size={38.700} $color="#3571b6">{"百万资金牛人持仓已公开，立即查看>"}</Text>
          </Grow>
          <Divider />
          <Cross size={34} color="#3571b6" w={3} />
        </PromoBanner>
      </ChartGround>

      <SectionTabs>
        {sections.map((s, i) => (
          <Tab key={s} $w={146.400} $on={i === 0}>{s}</Tab>
        ))}
      </SectionTabs>

      <CardStrip>
        <Card>
          <CardArt>
            <svg width="499" height="140" viewBox="0 0 499 140">
              <path d="M242 140V38H296L297 0H499V140Z" fill="#2b2221" />
              <path d="M270 140V75H331L334 17H473L477 140Z" fill="#271e1e" />
              <path d="M363 140L365 53H441L443 140Z" fill="#352322" />
            </svg>
          </CardArt>
          <CardHead>
            <CardIcon>
              <svg width="32" height="28" viewBox="0 0 32 28" fill="#beb8b6">
                <path d="M2 10H7V26H0ZM9 2H21L22 26H9ZM24 14H29L31 26H25Z" />
                <path d="M13 11L17 9V19H14V12Z" fill="#a0504a" />
              </svg>
            </CardIcon>
            <Text $size={41.500} $color={c.soft} $weight={500}>人气榜</Text>
            <svg width="16" height="26" viewBox="0 0 16 26" fill="none" stroke="#6e6866" strokeWidth="2.800">
              <path d="M2 2L13 13L2 24" />
            </svg>
          </CardHead>
        </Card>
        <Card>
          <CardArt>
            <svg width="499" height="140" viewBox="0 0 499 140">
              <path d="M260 0H499V140H275Z" fill="#2b2221" />
              <path d="M300 18H370L376 60L396 22Q450 8 480 40L499 55V140H315Z" fill="#271e1e" />
              <path d="M322 42H350L354 140H328ZM366 140L388 42H405L412 60Q430 36 466 46L486 58L470 80Q452 50 432 66Q422 78 438 100L455 140Z" fill="#352322" />
            </svg>
          </CardArt>
          <CardHead>
            <CardIcon><VersusText>VS</VersusText></CardIcon>
            <Text $size={41.500} $color={c.soft} $weight={500}>多空看盘</Text>
          </CardHead>
        </Card>
      </CardStrip>

      <BottomBar>
        <IndexCell>
          <Triangle $w={21} $h={7} $color="#737377" $up />
          <IndexRow $mt={3} $h={62}><Text $size={62} $color={c.hot}>4156.45</Text></IndexRow>
          <IndexRow $mt={-12} $h={60} style={{ marginLeft: 18 }}>
            <Text $size={56} $color={c.label}>上证</Text>
            <Text $size={44} $color={c.red}>0.87%</Text>
          </IndexRow>
        </IndexCell>
        <Action><YenIcon /><ActionLabel $size={54.500} $center={118}>交易</ActionLabel></Action>
        <Action><PostIcon /><ActionLabel $size={55} $center={118}>发帖</ActionLabel></Action>
        <Action><GridIcon /><ActionLabel $size={43} $center={108}>功能</ActionLabel></Action>
        <Action><DotsIcon size={60} stroke={2.600} r={2.800} /><ActionLabel $size={56.500} $center={118}>设自选</ActionLabel></Action>
      </BottomBar>

      <SystemNav>
        {["M0 3H36M0 19H36M0 35H36", "M9 2H27Q34 2 34 10V28Q34 36 27 36H9Q2 36 2 28V10Q2 2 9 2Z", "M32 3V34Q32 37 29 35L3 21Q0 19 3 17L29 2Q32 0 32 3Z"].map((d) => (
          <svg key={d} width="36" height="38" viewBox="0 0 36 38" fill="none" stroke="#9a9a9a" strokeWidth="2.400">
            <path d={d} />
          </svg>
        ))}
      </SystemNav>
    </Screen>
  );
}
